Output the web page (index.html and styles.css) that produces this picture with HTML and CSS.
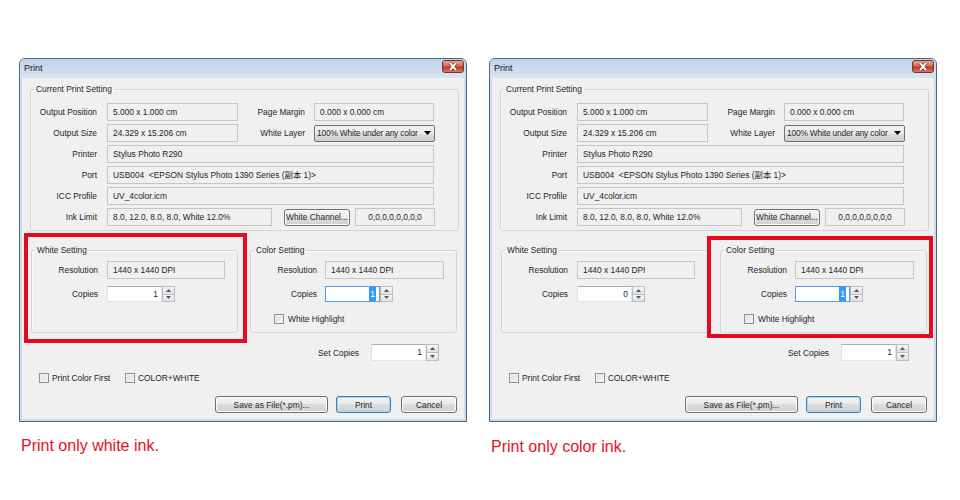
FILE: index.html
```html
<!DOCTYPE html>
<html>
<head>
    <meta charset="utf-8" />
    <title>Print</title>
    <link rel="stylesheet" href="styles.css">
</head>
<body>
    <div class="page">

        <!-- left: white ink only -->
        <div class="panel">
            <div class="dialog">
                <div class="titlebar">
                    <span class="title">Print</span>
                    <span class="close-btn">
                        <svg width="20" height="11" viewBox="0 0 20 11">
                            <path d="M7 2 L13 9 M13 2 L7 9" stroke="#6b2418" stroke-width="3.4" fill="none" />
                            <path d="M7 2 L13 9 M13 2 L7 9" stroke="#fff" stroke-width="2" fill="none" />
                        </svg>
                    </span>
                </div>
                <div class="dlg-body">
                    <fieldset class="grp grp-current">
                        <legend>Current Print Setting</legend>
                        <div class="grp-inner">
                            <div class="row">
                                <label class="lbl">Output Position</label>
                                <div class="fld w131">5.000 x 1.000 cm</div>
                                <label class="lbl lbl2">Page Margin</label>
                                <div class="fld w120">0.000 x 0.000 cm</div>
                            </div>
                            <div class="row">
                                <label class="lbl">Output Size</label>
                                <div class="fld w131">24.329 x 15.206 cm</div>
                                <label class="lbl lbl2">White Layer</label>
                                <div class="combo">
                                    <span class="combo-text">100% White under any color</span>
                                    <span class="combo-arrow"><svg width="7" height="4" viewBox="0 0 7 4"><path d="M0 0 H7 L3.5 4 Z" fill="#000" /></svg></span>
                                </div>
                            </div>
                            <div class="row">
                                <label class="lbl">Printer</label>
                                <div class="fld w327">Stylus Photo R290</div>
                            </div>
                            <div class="row">
                                <label class="lbl">Port</label>
                                <div class="fld w327">USB004 &nbsp;&lt;EPSON Stylus Photo 1390 Series (副本 1)&gt;</div>
                            </div>
                            <div class="row">
                                <label class="lbl">ICC Profile</label>
                                <div class="fld w327">UV_4color.icm</div>
                            </div>
                            <div class="row">
                                <label class="lbl">Ink Limit</label>
                                <div class="fld w165">8.0, 12.0, 8.0, 8.0, White 12.0%</div>
                                <div class="btn btn-channel">White Channel...</div>
                                <div class="fld fld-center w80">0,0,0,0,0,0,0,0</div>
                            </div>
                        </div>
                    </fieldset>

                    <div class="lower">
                        <fieldset class="grp grp-half">
                            <legend>White Setting</legend>
                            <div class="half-inner">
                                <div class="row">
                                    <label class="lbl lbl-w">Resolution</label>
                                    <div class="fld w118">1440 x 1440 DPI</div>
                                </div>
                                <div class="row row-spin">
                                    <label class="lbl lbl-w">Copies</label>
                                    <div class="spin">
                                        <div class="spin-val">1</div>
                                        <div class="spin-btns">
                                            <span class="spin-up"><svg width="5" height="3" viewBox="0 0 5 3"><path d="M0 3 L2.5 0 L5 3 Z" fill="#4b5a6e" /></svg></span>
                                            <span class="spin-down"><svg width="5" height="3" viewBox="0 0 5 3"><path d="M0 0 L2.5 3 L5 0 Z" fill="#4b5a6e" /></svg></span>
                                        </div>
                                    </div>
                                </div>
                            </div>
                        </fieldset>

                        <fieldset class="grp grp-half">
                            <legend>Color Setting</legend>
                            <div class="half-inner">
                                <div class="row">
                                    <label class="lbl lbl-c">Resolution</label>
                                    <div class="fld w119">1440 x 1440 DPI</div>
                                </div>
                                <div class="row row-spin">
                                    <label class="lbl lbl-c">Copies</label>
                                    <div class="spin spin-focus">
                                        <div class="spin-val"><span class="sel">1</span></div>
                                        <div class="spin-btns">
                                            <span class="spin-up"><svg width="5" height="3" viewBox="0 0 5 3"><path d="M0 3 L2.5 0 L5 3 Z" fill="#4b5a6e" /></svg></span>
                                            <span class="spin-down"><svg width="5" height="3" viewBox="0 0 5 3"><path d="M0 0 L2.5 3 L5 0 Z" fill="#4b5a6e" /></svg></span>
                                        </div>
                                    </div>
                                </div>
                                <div class="check-row">
                                    <span class="chk"></span>
                                    <span>White Highlight</span>
                                </div>
                            </div>
                        </fieldset>
                    </div>

                    <div class="set-copies">
                        <label class="set-lbl">Set Copies</label>
                        <div class="spin">
                            <div class="spin-val">1</div>
                            <div class="spin-btns">
                                <span class="spin-up"><svg width="5" height="3" viewBox="0 0 5 3"><path d="M0 3 L2.5 0 L5 3 Z" fill="#4b5a6e" /></svg></span>
                                <span class="spin-down"><svg width="5" height="3" viewBox="0 0 5 3"><path d="M0 0 L2.5 3 L5 0 Z" fill="#4b5a6e" /></svg></span>
                            </div>
                        </div>
                    </div>

                    <div class="options">
                        <div class="opt opt-first"><span class="chk"></span><span>Print Color First</span></div>
                        <div class="opt"><span class="chk"></span><span>COLOR+WHITE</span></div>
                    </div>

                    <div class="actions">
                        <div class="btn btn-save">Save as File(*.pm)...</div>
                        <div class="btn btn-default btn-print">Print</div>
                        <div class="btn btn-cancel">Cancel</div>
                    </div>
                </div>
                <div class="mark mark-white"></div>
            </div>
            <p class="caption">Print only white ink.</p>
        </div>

        <!-- right: color ink only -->
        <div class="panel">
            <div class="dialog">
                <div class="titlebar">
                    <span class="title">Print</span>
                    <span class="close-btn">
                        <svg width="20" height="11" viewBox="0 0 20 11">
                            <path d="M7 2 L13 9 M13 2 L7 9" stroke="#6b2418" stroke-width="3.4" fill="none" />
                            <path d="M7 2 L13 9 M13 2 L7 9" stroke="#fff" stroke-width="2" fill="none" />
                        </svg>
                    </span>
                </div>
                <div class="dlg-body">
                    <fieldset class="grp grp-current">
                        <legend>Current Print Setting</legend>
                        <div class="grp-inner">
                            <div class="row">
                                <label class="lbl">Output Position</label>
                                <div class="fld w131">5.000 x 1.000 cm</div>
                                <label class="lbl lbl2">Page Margin</label>
                                <div class="fld w120">0.000 x 0.000 cm</div>
                            </div>
                            <div class="row">
                                <label class="lbl">Output Size</label>
                                <div class="fld w131">24.329 x 15.206 cm</div>
                                <label class="lbl lbl2">White Layer</label>
                                <div class="combo">
                                    <span class="combo-text">100% White under any color</span>
                                    <span class="combo-arrow"><svg width="7" height="4" viewBox="0 0 7 4"><path d="M0 0 H7 L3.5 4 Z" fill="#000" /></svg></span>
                                </div>
                            </div>
                            <div class="row">
                                <label class="lbl">Printer</label>
                                <div class="fld w327">Stylus Photo R290</div>
                            </div>
                            <div class="row">
                                <label class="lbl">Port</label>
                                <div class="fld w327">USB004 &nbsp;&lt;EPSON Stylus Photo 1390 Series (副本 1)&gt;</div>
                            </div>
                            <div class="row">
                                <label class="lbl">ICC Profile</label>
                                <div class="fld w327">UV_4color.icm</div>
                            </div>
                            <div class="row">
                                <label class="lbl">Ink Limit</label>
                                <div class="fld w165">8.0, 12.0, 8.0, 8.0, White 12.0%</div>
                                <div class="btn btn-channel">White Channel...</div>
                                <div class="fld fld-center w80">0,0,0,0,0,0,0,0</div>
                            </div>
                        </div>
                    </fieldset>

                    <div class="lower">
                        <fieldset class="grp grp-half">
                            <legend>White Setting</legend>
                            <div class="half-inner">
                                <div class="row">
                                    <label class="lbl lbl-w">Resolution</label>
                                    <div class="fld w118">1440 x 1440 DPI</div>
                                </div>
                                <div class="row row-spin">
                                    <label class="lbl lbl-w">Copies</label>
                                    <div class="spin">
                                        <div class="spin-val">0</div>
                                        <div class="spin-btns">
                                            <span class="spin-up"><svg width="5" height="3" viewBox="0 0 5 3"><path d="M0 3 L2.5 0 L5 3 Z" fill="#4b5a6e" /></svg></span>
                                            <span class="spin-down"><svg width="5" height="3" viewBox="0 0 5 3"><path d="M0 0 L2.5 3 L5 0 Z" fill="#4b5a6e" /></svg></span>
                                        </div>
                                    </div>
                                </div>
                            </div>
                        </fieldset>

                        <fieldset class="grp grp-half">
                            <legend>Color Setting</legend>
                            <div class="half-inner">
                                <div class="row">
                                    <label class="lbl lbl-c">Resolution</label>
                                    <div class="fld w119">1440 x 1440 DPI</div>
                                </div>
                                <div class="row row-spin">
                                    <label class="lbl lbl-c">Copies</label>
                                    <div class="spin spin-focus">
                                        <div class="spin-val"><span class="sel">1</span></div>
                                        <div class="spin-btns">
                                            <span class="spin-up"><svg width="5" height="3" viewBox="0 0 5 3"><path d="M0 3 L2.5 0 L5 3 Z" fill="#4b5a6e" /></svg></span>
                                            <span class="spin-down"><svg width="5" height="3" viewBox="0 0 5 3"><path d="M0 0 L2.5 3 L5 0 Z" fill="#4b5a6e" /></svg></span>
                                        </div>
                                    </div>
                                </div>
                                <div class="check-row">
                                    <span class="chk"></span>
                                    <span>White Highlight</span>
                                </div>
                            </div>
                        </fieldset>
                    </div>

                    <div class="set-copies">
                        <label class="set-lbl">Set Copies</label>
                        <div class="spin">
                            <div class="spin-val">1</div>
                            <div class="spin-btns">
                                <span class="spin-up"><svg width="5" height="3" viewBox="0 0 5 3"><path d="M0 3 L2.5 0 L5 3 Z" fill="#4b5a6e" /></svg></span>
                                <span class="spin-down"><svg width="5" height="3" viewBox="0 0 5 3"><path d="M0 0 L2.5 3 L5 0 Z" fill="#4b5a6e" /></svg></span>
                            </div>
                        </div>
                    </div>

                    <div class="options">
                        <div class="opt opt-first"><span class="chk"></span><span>Print Color First</span></div>
                        <div class="opt"><span class="chk"></span><span>COLOR+WHITE</span></div>
                    </div>

                    <div class="actions">
                        <div class="btn btn-save">Save as File(*.pm)...</div>
                        <div class="btn btn-default btn-print">Print</div>
                        <div class="btn btn-cancel">Cancel</div>
                    </div>
                </div>
                <div class="mark mark-color"></div>
            </div>
            <p class="caption caption-color">Print only color ink.</p>
        </div>

    </div>
</body>
</html>
```

FILE: styles.css
```css
* {
    padding: 0;
    margin: 0;
    box-sizing: border-box;
}

body {
    background: #fff;
    font-family: "Liberation Sans", Arial, "Noto Sans CJK SC", sans-serif;
}

.page {
    display: flex;
    gap: 22px;
    padding: 58px 0 0 19px;
}

.panel {
    width: 448px;
}

/* window frame */
.dialog {
    position: relative;
    border: 1px solid #4a6a82;
    border-radius: 6px 6px 0 0;
    background: #cddcec;
    font-size: 8.4px;
    color: #1e1e1e;
}

.titlebar {
    height: 19px;
    display: flex;
    justify-content: space-between;
    align-items: flex-start;
    padding: 1px 2px 0 4px;
    border-radius: 5px 5px 0 0;
    background: linear-gradient(#c1d3e8, #d9e4f1);
}

.title {
    font-size: 9px;
    line-height: 17px;
    color: #111;
}

.close-btn {
    width: 22px;
    height: 13px;
    display: flex;
    align-items: center;
    justify-content: center;
    border: 1px solid #7a3126;
    border-radius: 3px;
    background: linear-gradient(#e6a696, #d06a55 45%, #bf3b22 55%, #d77a62);
}

.dlg-body {
    margin: 0 2px 2px;
    padding: 6px 0 6px;
    background: #f0f0f0;
}

/* group boxes */
.grp {
    border: 1px solid #d3d3d3;
    border-radius: 3px;
    box-shadow: inset 1px 1px 0 #fbfbfb;
}

.grp legend {
    margin-left: 3px;
    padding: 0 2px;
    line-height: 10px;
    font-size: 8.4px;
}

.grp-current {
    margin: 0 5px 0 8px;
}

.grp-inner {
    display: flex;
    flex-direction: column;
    gap: 3px;
    padding: 9px 0 4px;
}

.row {
    display: flex;
    align-items: center;
    height: 18px;
}

.lbl {
    width: 66px;
    margin-right: 10px;
    text-align: right;
}

.lbl2 {
    width: 67px;
    margin-right: 9px;
}

.fld {
    height: 18px;
    line-height: 16px;
    padding-left: 5px;
    border: 1px solid #c5c5c5;
    background: #f0f0f0;
    white-space: nowrap;
    overflow: hidden;
}

.fld-center {
    text-align: center;
    padding-left: 0;
}

.w80 { width: 80px; margin-left: 5px; }
.w118 { width: 118px; }
.w119 { width: 119px; }
.w120 { width: 120px; }
.w131 { width: 131px; }
.w165 { width: 165px; }
.w327 { width: 327px; }

.combo {
    width: 121px;
    height: 17px;
    display: flex;
    align-items: center;
    border: 1px solid #707070;
    border-radius: 2px;
    background: linear-gradient(#f2f2f2, #ebebeb 50%, #dddddd 50%, #cfcfcf);
}

.combo-text {
    flex: 1;
    padding-left: 2px;
    letter-spacing: -0.18px;
    white-space: nowrap;
}

.combo-arrow {
    width: 13px;
    display: flex;
    justify-content: center;
}

/* buttons */
.btn {
    height: 17px;
    display: flex;
    align-items: center;
    justify-content: center;
    border: 1px solid #707070;
    border-radius: 3px;
    background: linear-gradient(#f3f3f3, #ebebeb 50%, #dddddd 50%, #d0d0d0);
    box-shadow: inset 0 0 0 1px #fcfcfc;
    white-space: nowrap;
}

.btn-channel {
    width: 66px;
    margin-left: 12px;
}

.btn-default {
    border-color: #3c7fb1;
    box-shadow: inset 0 0 0 1px #a9d7f3;
}

/* white / color setting */
.lower {
    display: flex;
    gap: 12px;
    margin: 14px 0 0 9px;
}

.grp-half {
    width: 207px;
}

.half-inner {
    padding: 6px 0 7px;
}

.row-spin {
    height: 16px;
    margin-top: 7px;
}

.lbl-w {
    width: 66px;
    margin-right: 9px;
}

.lbl-c {
    width: 66px;
    margin-right: 8px;
}

.spin {
    width: 68px;
    height: 16px;
    display: flex;
}

.spin-val {
    flex: 1;
    text-align: right;
    padding-right: 3px;
    line-height: 14px;
    background: #fff;
    border: 1px solid #dfe3e8;
    border-top-color: #abadb3;
}

.spin-focus .spin-val {
    border-color: #569de5;
}

.sel {
    display: inline-block;
    padding: 0 1px;
    background: #3399ff;
    color: #fff;
}

.spin-btns {
    width: 13px;
    display: flex;
    flex-direction: column;
}

.spin-btns span {
    flex: 1;
    display: flex;
    align-items: center;
    justify-content: center;
    border: 1px solid #b9bec3;
    background: linear-gradient(#f7f7f7, #e1e1e1);
}

.spin-down {
    border-top: none !important;
}

.check-row {
    display: flex;
    align-items: center;
    gap: 4px;
    height: 12px;
    margin-top: 11px;
    padding-left: 23px;
}

.chk {
    width: 10px;
    height: 10px;
    border: 1px solid #8f8f8f;
    background: linear-gradient(135deg, #dcdcdc, #f8f8f8);
    box-shadow: inset 0 0 0 1px #f2f2f2;
}

.set-copies {
    display: flex;
    justify-content: flex-end;
    align-items: center;
    height: 17px;
    margin-top: 11px;
    padding-right: 25px;
}

.set-lbl {
    margin-right: 12px;
}

.set-copies .spin {
    height: 17px;
}

.options {
    display: flex;
    align-items: center;
    height: 12px;
    margin-top: 11px;
    padding-left: 17px;
}

.opt {
    display: flex;
    align-items: center;
    gap: 3px;
}

.opt-first {
    width: 86px;
}

.actions {
    display: flex;
    justify-content: flex-end;
    margin-top: 12px;
    padding-right: 7px;
}

.btn-save { width: 113px; }
.btn-print { width: 55px; margin-left: 8px; }
.btn-cancel { width: 56px; margin-left: 10px; }

/* red highlight marks drawn over the screenshot */
.mark {
    position: absolute;
    border: 4px solid #e60a1e;
}

.mark-white {
    left: 4px;
    top: 174px;
    width: 223px;
    height: 110px;
}

.mark-color {
    left: 217px;
    top: 177px;
    width: 226px;
    height: 102px;
}

.caption {
    margin: 15px 0 0 2px;
    font-size: 16px;
    line-height: 18px;
    color: #e5102c;
}

.caption-color {
    margin-top: 16px;
}
```
